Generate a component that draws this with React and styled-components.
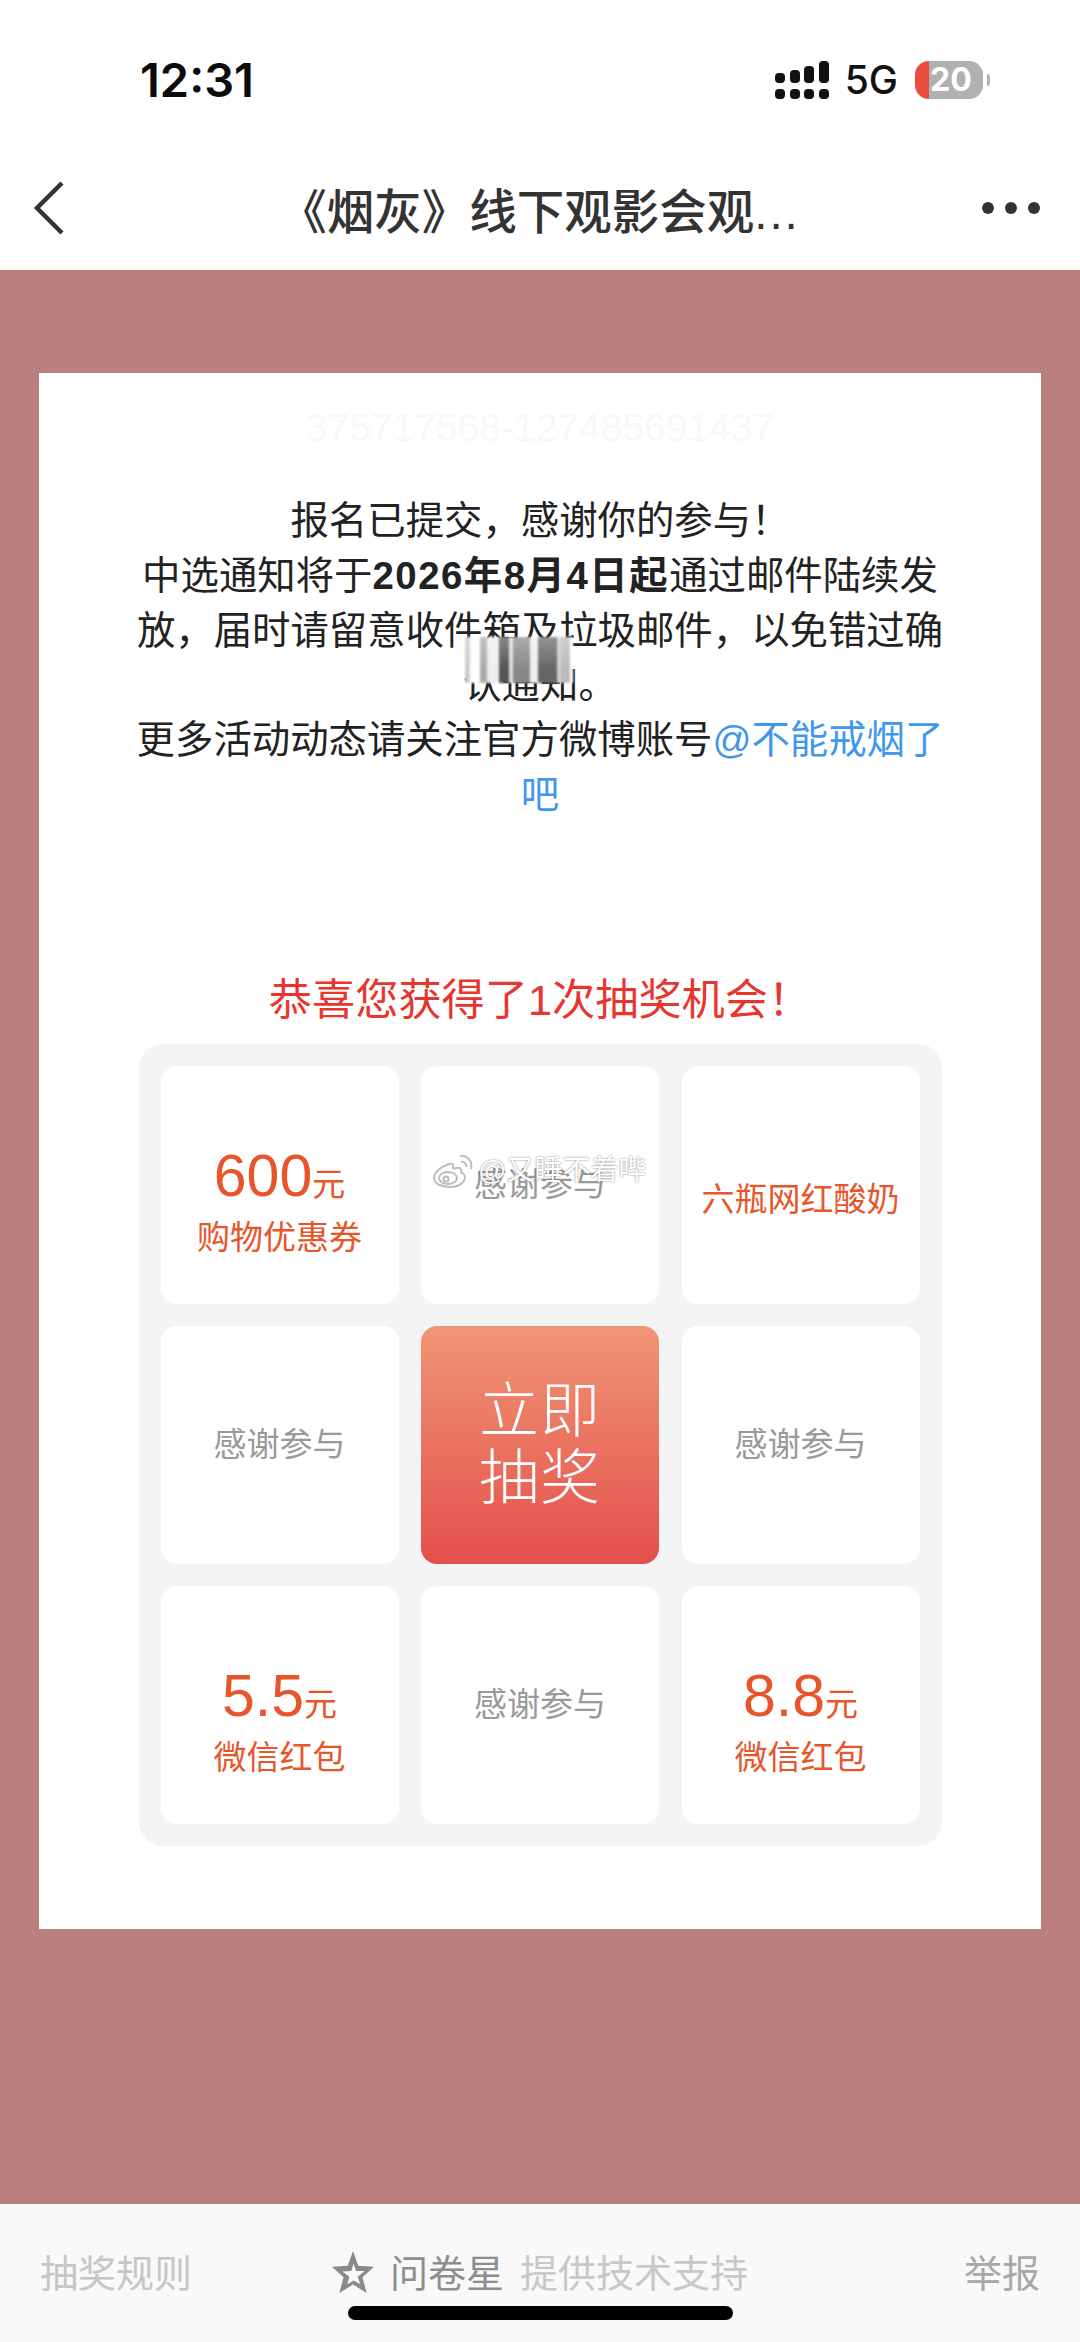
import React from 'react';
import styled, { createGlobalStyle } from 'styled-components';

const GlobalStyle = createGlobalStyle`
  html, body {
    margin: 0;
    padding: 0;
    background: #fff;
  }
  * {
    box-sizing: border-box;
  }
`;

const FONT = `"Liberation Sans", "Noto Sans CJK SC", sans-serif`;

const Page = styled.div`
  width: 1080px;
  height: 2342px;
  display: flex;
  flex-direction: column;
  position: relative;
  overflow: hidden;
  font-family: ${FONT};
`;

const StatusBar = styled.div`
  height: 146px;
  flex: none;
  display: flex;
  justify-content: space-between;
  align-items: flex-start;
  padding: 56px 90px 0 140px;
  background: #fff;
`;

const Clock = styled.div`
  font-family: Inter, sans-serif;
  font-size: 47px;
  font-weight: 600;
  line-height: 48px;
  color: #0c0c0c;
`;

const StatusIcons = styled.div`
  display: flex;
  align-items: center;
  height: 48px;
`;

const Network = styled.div`
  font-family: Inter, sans-serif;
  font-size: 39px;
  font-weight: 500;
  line-height: 48px;
  color: #111;
  margin: 0 17px 0 16px;
`;

const Battery = styled.div`
  width: 68px;
  height: 38px;
  border-radius: 14px;
  background: linear-gradient(90deg, #ea4b3b 14px, #b1b1b1 14px);
  color: #fff;
  font-family: Inter, sans-serif;
  font-size: 32px;
  font-weight: 700;
  line-height: 38px;
  padding-left: 15px;
`;

const BatteryTip = styled.div`
  width: 3px;
  height: 12px;
  margin-left: 4px;
  border-radius: 0 3px 3px 0;
  background: #b1b1b1;
`;

const NavBar = styled.div`
  height: 124px;
  flex: none;
  display: grid;
  grid-template-columns: 1fr auto 1fr;
  align-items: center;
  padding: 0 40px 0 33px;
  background: #fff;
`;

const NavTitle = styled.div`
  padding-left: 6px;
  font-size: 47.5px;
  font-weight: 500;
  color: #333;
  white-space: nowrap;
`;

const NavDots = styled.span`
  letter-spacing: 2px;
`;

const NavMore = styled.div`
  display: flex;
  justify-content: flex-end;
  gap: 11px;
`;

const Dot = styled.span`
  width: 12px;
  height: 12px;
  border-radius: 50%;
  background: #333;
`;

const Main = styled.div`
  flex: 1;
  background: #ba7f7e;
  padding: 103px 39px 0;
`;

const Card = styled.div`
  height: 1556px;
  background: #fff;
  display: flex;
  flex-direction: column;
  align-items: center;
  padding-top: 32px;
`;

const Serial = styled.div`
  font-size: 39px;
  line-height: 46px;
  color: #f8f8f8;
`;

const Notice = styled.div`
  position: relative;
  width: 808px;
  margin-top: 43px;
  font-size: 38.4px;
  line-height: 54.8px;
  color: #222;
  text-align: center;
`;

const Strong = styled.b`
  letter-spacing: 1.5px;
`;

const Link = styled.span`
  color: #3f98ec;
`;

/* streaky smudge that sits over the fourth line of the notice */
const Smear = styled.div`
  position: absolute;
  left: 329px;
  top: 143px;
  width: 108px;
  height: 46px;
  filter: blur(0.8px);
  background:
    linear-gradient(180deg, rgba(255, 255, 255, 0.3), rgba(255, 255, 255, 0) 70%),
    linear-gradient(
      90deg,
      #ccc 0 5px,
      #fff 5px 15px,
      #aaa 15px 22px,
      #eee 22px 34px,
      #555 34px 44px,
      #ddd 44px 48px,
      #888 48px 65px,
      #eee 65px 73px,
      #666 73px 92px,
      #ccc 92px 96px,
      #bbb 96px 105px,
      #fff 105px
    );
`;

const DrawTitle = styled.div`
  margin-top: 149px;
  font-size: 43.2px;
  line-height: 56px;
  color: #e8352e;
`;

const Board = styled.div`
  width: 803px;
  margin-top: 16px;
  padding: 22px;
  border-radius: 24px;
  background: #f4f4f4;
  display: grid;
  grid-template-columns: repeat(3, 238px);
  grid-auto-rows: 238px;
  justify-content: space-between;
  row-gap: 22px;
`;

const Cell = styled.div`
  position: relative;
  border-radius: 16px;
  background: #fff;
  display: flex;
  flex-direction: column;
  align-items: center;
  justify-content: center;
  padding-top: ${(p) => p.$offset || 0}px;
`;

const Amount = styled.div`
  font-size: 59px;
  line-height: 60px;
  color: #e8552a;
  display: flex;
  align-items: baseline;
`;

const Unit = styled.span`
  font-size: 33px;
`;

const PrizeLabel = styled.div`
  margin-top: ${(p) => p.$gap || 0}px;
  font-size: 33px;
  line-height: 40px;
  color: #e8552a;
`;

const Blank = styled.div`
  font-size: 33px;
  line-height: 40px;
  color: #999;
`;

const DrawButton = styled.div`
  border-radius: 16px;
  background: linear-gradient(180deg, #f09676, #e44f4b);
  color: #fff;
  font-size: 60px;
  line-height: 67px;
  font-weight: 300;
  letter-spacing: 1px;
  text-align: center;
  display: flex;
  align-items: center;
  justify-content: center;
`;

const Watermark = styled.div`
  position: absolute;
  left: 11px;
  top: 87px;
  display: flex;
  align-items: center;
  gap: 2px;
  white-space: nowrap;
  font-size: 28px;
  line-height: 36px;
  color: #fff;
  text-shadow: 0 0 2px rgba(0, 0, 0, 0.55);
`;

const Footer = styled.div`
  height: 138px;
  flex: none;
  background: #f9f9f9;
  display: grid;
  grid-template-columns: 1fr auto 1fr;
  align-items: start;
  padding: 48px 40px 0;
  font-size: 38px;
  line-height: 44px;
`;

const FooterText = styled.span`
  color: ${(p) => p.$color};
  text-align: ${(p) => p.$align || 'left'};
`;

const Credit = styled.div`
  display: flex;
  align-items: center;
  gap: 16px;
`;

const StarMark = styled.svg`
  margin-top: -4px;
`;

const HomeBar = styled.div`
  position: absolute;
  left: 348px;
  bottom: 22px;
  width: 385px;
  height: 14px;
  border-radius: 7px;
  background: #000;
`;

const SignalIcon = () => (
  <svg width="54" height="38" viewBox="0 0 54 38">
    <rect x="0" y="28" width="10" height="10" rx="4" fill="#111" />
    <rect x="15" y="28" width="10" height="10" rx="4" fill="#111" />
    <rect x="29" y="28" width="10" height="10" rx="4" fill="#111" />
    <rect x="44" y="28" width="10" height="10" rx="4" fill="#111" />
    <rect x="0" y="12" width="10" height="10" rx="4" fill="#111" />
    <rect x="15" y="9" width="10" height="13" rx="4" fill="#111" />
    <rect x="29" y="5" width="10" height="17" rx="4" fill="#111" />
    <rect x="44" y="0" width="10" height="22" rx="4" fill="#111" />
  </svg>
);

const BackIcon = () => (
  <svg width="32" height="54" viewBox="0 0 32 54">
    <path d="M29 2 L4 27 L29 52" fill="none" stroke="#333" strokeWidth="4.5" />
  </svg>
);

// outer star with a smaller star cut out, thick on the left like a bevel
const StarIcon = () => (
  <StarMark width="42" height="42" viewBox="0 0 40 40">
    <path
      d="M20 0 L25 14 L40 15 L29 25 L33 40 L20 32 L7 40 L11 25 L0 15 L15 14 Z M20.5 12 L18.5 19 L10 19.5 L16.5 24.5 L14.5 32 L20.5 28 L27 31.5 L24.5 24.5 L31 19 L23 19 Z"
      fill="#8a8a8a"
      fillRule="evenodd"
    />
  </StarMark>
);

const WeiboMark = () => (
  <svg width="44" height="36" viewBox="0 0 44 36" fill="none" stroke="#bdbdbd" strokeWidth="2">
    <path d="M17 11 C8 14 2 20 2 25 C2 31 10 34 18 34 C27 34 33 29 33 24 C33 21 30 20 29 19 C30 16 28 14 24 15 C22 16 21 16 21 15 C22 11 20 10 17 11 Z" />
    <ellipse cx="16" cy="25" rx="9" ry="6" />
    <circle cx="14" cy="26" r="2.5" />
    <path d="M28 3 C35 2 41 8 39 16" />
    <path d="M29 9 C32 8 35 11 34 14" />
  </svg>
);

const Prize = ({ value, label }) => (
  <Cell $offset={34}>
    <Amount>
      {value}
      <Unit>元</Unit>
    </Amount>
    <PrizeLabel $gap={3}>{label}</PrizeLabel>
  </Cell>
);

const Thanks = ({ children }) => (
  <Cell>
    <Blank>感谢参与</Blank>
    {children}
  </Cell>
);

const App = () => {
  return (
    <Page>
      <GlobalStyle />
      <StatusBar>
        <Clock>12:31</Clock>
        <StatusIcons>
          <SignalIcon />
          <Network>5G</Network>
          <Battery>20</Battery>
          <BatteryTip />
        </StatusIcons>
      </StatusBar>

      <NavBar>
        <BackIcon />
        <NavTitle>
          《烟灰》线下观影会观<NavDots>...</NavDots>
        </NavTitle>
        <NavMore>
          <Dot />
          <Dot />
          <Dot />
        </NavMore>
      </NavBar>

      <Main>
        <Card>
          <Serial>375717568-127485691437</Serial>
          <Notice>
            报名已提交，感谢你的参与！
            <br />
            中选通知将于<Strong>2026年8月4日起</Strong>通过邮件陆续发放，届时请留意收件箱及垃圾邮件，以免错过确认通知。
            <br />
            更多活动动态请关注官方微博账号<Link>@不能戒烟了吧</Link>
            <Smear />
          </Notice>

          <DrawTitle>恭喜您获得了1次抽奖机会！</DrawTitle>

          <Board>
            <Prize value="600" label="购物优惠券" />
            <Thanks>
              <Watermark>
                <WeiboMark />
                @又睡不着哔
              </Watermark>
            </Thanks>
            <Cell $offset={30}>
              <PrizeLabel>六瓶网红酸奶</PrizeLabel>
            </Cell>

            <Thanks />
            <DrawButton>
              立即
              <br />
              抽奖
            </DrawButton>
            <Thanks />

            <Prize value="5.5" label="微信红包" />
            <Thanks />
            <Prize value="8.8" label="微信红包" />
          </Board>
        </Card>
      </Main>

      <Footer>
        <FooterText $color="#c6c6c6">抽奖规则</FooterText>
        <Credit>
          <StarIcon />
          <FooterText $color="#8e8e8e">问卷星</FooterText>
          <FooterText $color="#c8c8c8">提供技术支持</FooterText>
        </Credit>
        <FooterText $color="#a8a8a8" $align="right">举报</FooterText>
      </Footer>
      <HomeBar />
    </Page>
  );
};

export default App;
